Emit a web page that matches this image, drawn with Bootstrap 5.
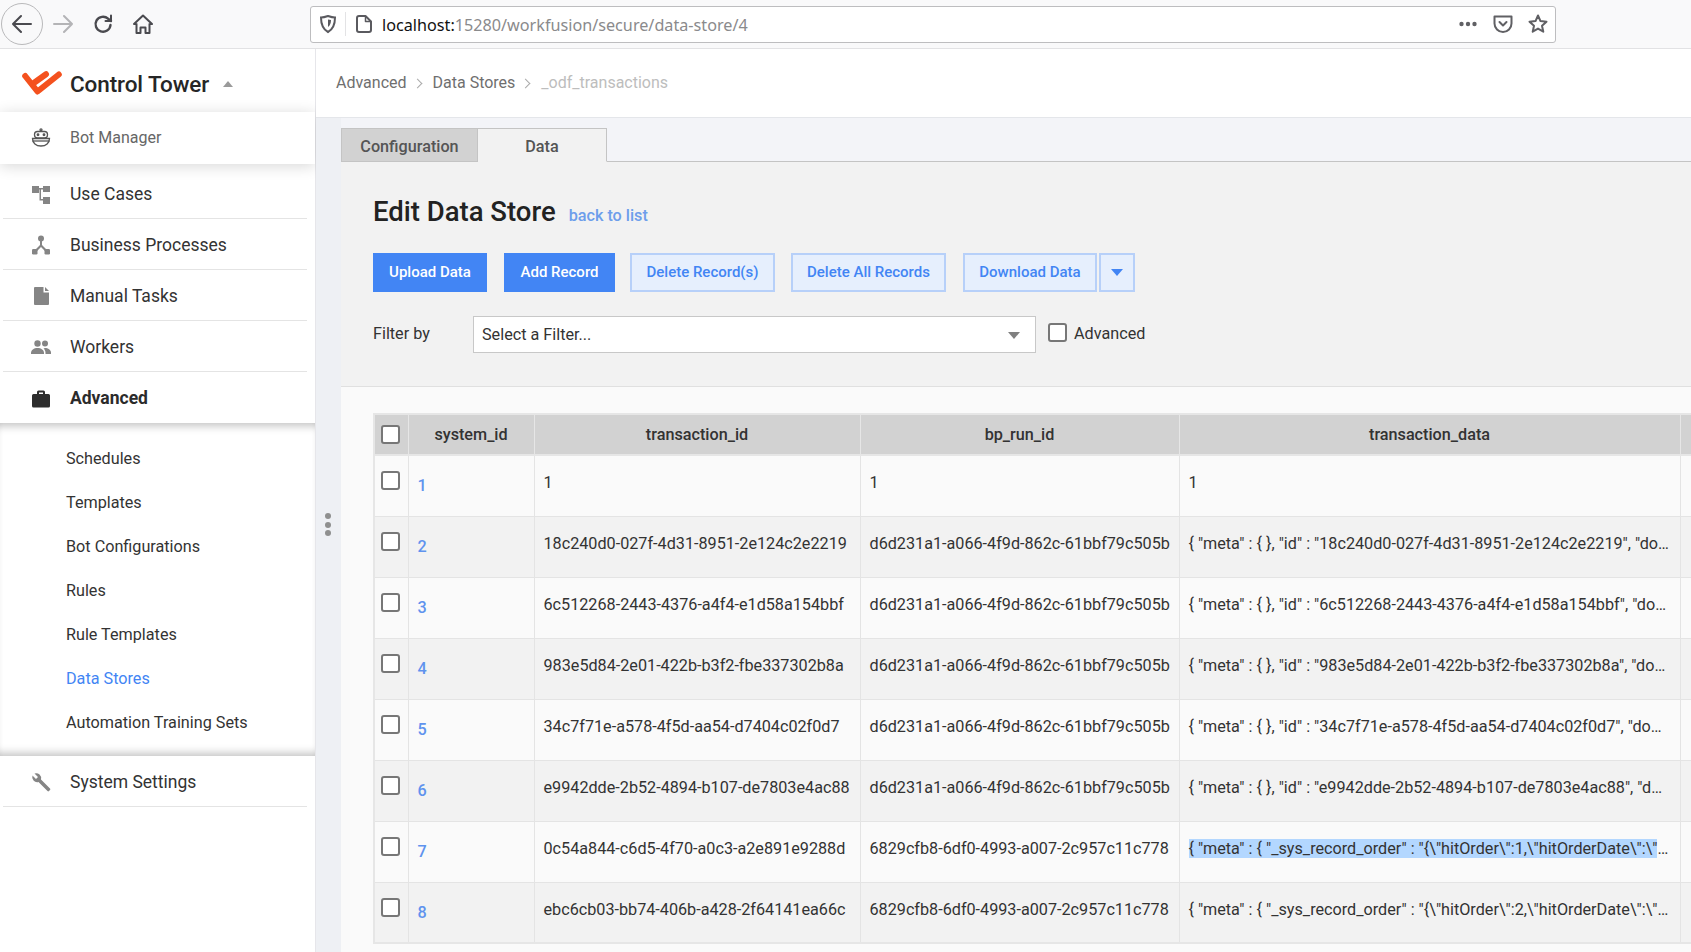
<!DOCTYPE html>
<html lang="en">
<head>
<meta charset="utf-8">
<title>Data Store</title>
<link href="https://cdn.jsdelivr.net/npm/bootstrap@5.3.0/dist/css/bootstrap.min.css" rel="stylesheet">
<style>
html,body{height:952px;overflow:hidden;background:#fff}
body{font-family:Roboto,"Liberation Sans",sans-serif;color:#333}
.chrome{height:49px;background:#f9f9fa;border-bottom:1px solid #e2e2e4;padding-left:1px}
.backbtn{width:42px;height:42px;border:1px solid #b9b9bb;border-radius:50%;background:#fff0;margin-right:10px}
.chicon{width:20px;height:20px;display:block}
.navslot{width:40px}
.urlbox{margin-left:157px;width:1246px;height:37px;background:#fff;border:1px solid #bdbdbf;border-radius:3px;padding:0 7px;font-family:"Noto Sans",sans-serif;font-size:16.2px;color:#8a8a8c;white-space:nowrap}
.urlbox b{font-weight:400;color:#111}
.urltext{padding-top:2px}
.urldiv{width:1px;height:24px;background:#e3e3e5;margin:0 8px 0 7px}
.gap15{margin-right:15px}
.shell{height:903px}
.sidepane{width:316px;flex:none;background:#fff;border-right:1px solid #e6e6ea;position:relative}
.brandrow{height:63px;padding-left:22px}
.brandrow svg{margin-top:4px}
.brandname{font-size:22.5px;font-weight:500;color:#262626;margin-left:8px;margin-top:8px;letter-spacing:-.1px}
.brandcaret{width:0;height:0;border-left:5px solid transparent;border-right:5px solid transparent;border-bottom:6px solid #9a9a9a;margin-left:14px;margin-top:6px}
.botrow{height:52px;padding-left:31px;background:#fff;box-shadow:0 2px 14px rgba(0,0,0,.16);font-size:16px;color:#666;position:relative}
.sidelist{background:transparent}
.sidelist .list-group-item{height:51px;margin:0 8px 0 3px;padding:2px 0 0 28px;border:0;border-bottom:1px solid #e4e4e4;border-radius:0;font-size:17.5px;color:#333;background:transparent;display:flex;align-items:center}
.sideicon{width:20px;height:20px;flex:none;margin-right:19px;display:block}
.sidelist .firstitem{height:55px;padding-top:7px}
.sidelist .openitem{font-weight:700;color:#2b2b2b;border-bottom:0;margin-right:0}
.subwrap{height:333px;padding-top:14px;background:#fff;box-shadow:inset 0 9px 9px -6px rgba(0,0,0,.24),inset 0 -9px 9px -6px rgba(0,0,0,.24)}
.subwrap a{display:flex;align-items:center;height:44px;padding-left:66px;font-size:16.2px;color:#333;text-decoration:none}
.subwrap a.onitem{color:#4285f4}
.gutter{width:25px;flex:none;background:#eef0f4;position:relative}
.gripdots{position:absolute;left:9px;top:464px;display:flex;flex-direction:column;gap:2.5px}
.gripdots span{width:6px;height:6px;border-radius:50%;background:#8f8f8f}
.mainpane{flex:1;min-width:0;background:#f3f4f8;position:relative}
.crumbbar{height:69px;margin-left:-25px;background:#fff;border-bottom:1px solid #e4e6ea;padding-left:20px;font-size:16px}
.crumbbar .breadcrumb-item{color:#6f6f6f;display:flex;align-items:center}
.crumbbar .breadcrumb-item+.breadcrumb-item{padding-left:7px}
.crumbbar .breadcrumb-item+.breadcrumb-item::before{content:"";width:7px;height:7px;border-top:1.5px solid #aaa;border-right:1.5px solid #aaa;transform:rotate(45deg);display:block;float:none;padding:0;margin:0 12px 0 0}
.crumbbar .breadcrumb-item.active{color:#bdbdbd}
.tabline{margin-top:10px;border-bottom:1px solid #c4c4c4;height:34px;flex-wrap:nowrap}
.tabline .nav-link{height:34px;border:1px solid #c4c4c4;border-radius:0;margin:0;padding:5px 0 0;display:flex;align-items:center;justify-content:center;font-size:16.2px;font-weight:500;color:#555}
.tabconf{width:137px;background:#d2d2d2}
.tabline .nav-link.tabdata{width:129px;background:#f2f2f2;border-left:0;border-bottom-color:#f2f2f2;color:#555}
.editpanel{height:225px;background:#f2f2f2;border-bottom:1px solid #e0e0e0;padding:0 0 0 32px;width:100%}
.edithead{padding-top:7px;height:91px;align-items:center}
.edithead h1{font-size:27.5px;font-weight:500;margin:0;color:#222}
.edithead a{font-size:16.2px;color:#6d9eeb;text-decoration:none;font-weight:500;margin-left:13px;padding-top:10px}
.actionrow{height:39px}
.actionrow .btn{height:39px;padding:0;font-size:15px;font-weight:500;border-radius:0;display:flex;align-items:center;justify-content:center}
.btnsolid{background:#4285f4;border:0;color:#fff}
.btnpale{background:#e6effd;border:2px solid #b7d0f9;color:#4285f4}
.w114{width:114px;margin-right:17px}.w111{width:111px;margin-right:15px}.w145{width:145px;margin-right:16px}.w155{width:155px;margin-right:17px}.w134{width:134px;margin-right:2px}.w36{width:36px}
.downcaret{width:0;height:0;border-left:6px solid transparent;border-right:6px solid transparent;border-top:7px solid #4285f4}
.filterrow{margin-top:24px;height:37px;font-size:16.2px;color:#333}
.filterlabel{width:100px}
.filtersel{width:563px;height:37px;border:1px solid #c8c8c8;padding:2px 8px 0;display:flex;align-items:center;justify-content:space-between;background:#fff}
.selcaret{width:0;height:0;border-left:6px solid transparent;border-right:6px solid transparent;border-top:7px solid #808080;margin-right:7px}
.boxmark{display:block;width:19px;height:19px;flex:none;border:2px solid #777;border-radius:3px;background-color:#fff}
.advcheck{margin-left:12px}
.advcheck .boxmark{margin-bottom:4px}
.advcheck label{margin-left:7px}
.gridarea{background:#fafafa;height:566px;padding:26px 0 0 32px;overflow:hidden}
.datatable{table-layout:fixed;width:1506px;margin:0;border-collapse:collapse;border:2px solid #e6e6e6;font-size:16.2px;color:#333;--bs-table-bg:transparent}
.datatable th{height:41px;padding:2px 0 0;text-align:center;vertical-align:middle;background:#d2d2d2;font-weight:500;font-size:16.2px;color:#333;border:1px solid #e6e6e6;border-bottom:2px solid #e6e6e6}
.datatable td{height:61px;padding:17px 2px 0 9px;vertical-align:top;border:1px solid #e4e4e4;border-top:0;white-space:nowrap;overflow:hidden;text-overflow:ellipsis;line-height:19px}
.datatable tr:nth-child(odd) td{background:#fafafa}
.datatable tr:nth-child(even) td{background:#f2f2f2}
.datatable th .boxmark{margin:-2px auto 0 6px}
.datatable td.tickcell{padding:15px 0 0 6px}
.datatable td.linkcell{padding:20px 0 0 9px}
.datatable td.linkcell a{color:#5f93ee;text-decoration:none;font-weight:500}
.datatable td.jsoncell{padding-right:10px}
.datatable td.shortclip{padding-right:16px}
.picked{background:#b3d7ff}
</style>
</head>
<body>
<div class="chrome d-flex align-items-center">
  <div class="backbtn d-flex align-items-center justify-content-center"><svg class="chicon" viewBox="0 0 20 20" fill="none" stroke="#4a4a4f" stroke-width="2" stroke-linecap="round" stroke-linejoin="round"><path d="M1 10h18M9 2l-8 8 8 8"/></svg></div>
  <div class="navslot"><svg class="chicon" viewBox="0 0 20 20" fill="none" stroke="#b4b4b6" stroke-width="2" stroke-linecap="round" stroke-linejoin="round"><path d="M1 10h18M11 2l8 8-8 8"/></svg></div>
  <div class="navslot"><svg class="chicon" viewBox="0 0 20 20" fill="none" stroke="#4a4a4f" stroke-width="2.4" stroke-linecap="round" stroke-linejoin="round"><path d="M17.5 11a7.5 7.5 0 1 1-2.4-6.3L18 7"/><path d="M18 1.5V7h-5.5" stroke-width="2"/></svg></div>
  <div><svg class="chicon" viewBox="0 0 20 20" fill="none" stroke="#4a4a4f" stroke-width="2" stroke-linejoin="round"><path d="M1 10l9-8.5 9 8.500h-2.500v9H12.500v-5.500h-5V19H3.500v-9z"/></svg></div>
  <div class="urlbox d-flex align-items-center">
    <svg class="chicon" viewBox="0 0 20 20" fill="none" stroke="#5a5a5f" stroke-width="2"><path d="M3 3.500c2 0 5-.8 7-1.500 2 .7 5 1.500 7 1.500 0 7-1.500 11.500-7 14.500C4.500 15 3 10.500 3 3.500z"/><path d="M10 5.500c1 .3 2 .5 3 .5 0 3-.8 5.500-3 7z" fill="#5a5a5f" stroke="none"/></svg>
    <span class="urldiv"></span>
    <svg class="chicon" viewBox="0 0 20 20" fill="none" stroke="#5a5a5f" stroke-width="2" stroke-linejoin="round"><path d="M3 4a2 2 0 0 1 2-2h6.500L17 7.500V16a2 2 0 0 1-2 2H5a2 2 0 0 1-2-2z"/><path d="M11.500 2v5.500H17" stroke-width="1.500"/></svg>
    <span class="ms-2 flex-grow-1 urltext"><b>localhost:</b>15280/workfusion/secure/data-store/4</span>
    <svg class="chicon gap15" viewBox="0 0 20 20" fill="#606064"><circle cx="3.500" cy="10" r="2.200"/><circle cx="10" cy="10" r="2.200"/><circle cx="16.500" cy="10" r="2.200"/></svg>
    <svg class="chicon gap15" viewBox="0 0 20 20" fill="none" stroke="#606064" stroke-width="2" stroke-linecap="round" stroke-linejoin="round"><path d="M1.500 2.500h17v7a8.500 8.500 0 0 1-17 0z"/><path d="M6.500 8l3.500 3.500L13.500 8"/></svg>
    <svg class="chicon" viewBox="0 0 20 20" fill="none" stroke="#606064" stroke-width="2" stroke-linejoin="round"><path d="M10 1.500l2.500 5.600 6 .6-4.500 4 1.300 6-5.300-3.100-5.300 3.100 1.300-6-4.500-4 6-.6z"/></svg>
  </div>
</div>
<div class="shell d-flex">
  <aside class="sidepane">
    <div class="brandrow d-flex align-items-center">
      <svg width="40" height="24" viewBox="0 0 40 24" fill="none" stroke="#f4511e" stroke-width="6" stroke-linecap="round" stroke-linejoin="round"><path d="M3.200 5l12.300 15.500L36.800 3.500"/><path d="M12.500 11.500L24 3.200"/></svg>
      <span class="brandname">Control Tower</span><span class="brandcaret"></span>
    </div>
    <div class="botrow d-flex align-items-center">
      <svg class="sideicon" viewBox="0 0 20 20" fill="none" stroke="#555" stroke-width="1.300"><circle cx="10" cy="1.800" r="1"/><rect x="3.500" y="3.500" width="13" height="6.500" rx="3"/><path d="M1.500 10.500h17c0 4.500-3.500 7.500-8.500 7.500s-8.500-3-8.500-7.500z"/><path d="M1.500 13h17"/><circle cx="7" cy="6.700" r=".8" fill="#555"/><circle cx="13" cy="6.700" r=".8" fill="#555"/></svg>
      Bot Manager
    </div>
    <div class="list-group sidelist">
      <div class="list-group-item firstitem"><svg class="sideicon" viewBox="0 0 20 20" fill="#858585"><path d="M1 1h7v7H1z"/><path d="M12 1h7v6h-7zM12 12h7v7h-7z"/><path d="M8 3h4v1.500h-2V14h2v1.500H8.500V4.500H8z"/></svg>Use Cases</div>
      <div class="list-group-item"><svg class="sideicon" viewBox="0 0 20 20" fill="#858585"><circle cx="10" cy="3.500" r="3"/><rect x="1" y="14" width="5.500" height="5.500" rx="1.200"/><rect x="13.500" y="14" width="5.500" height="5.500" rx="1.200"/><path d="M9 5h2v5l5 5-1.500 1.500L10 12l-4.500 4.500L4 15l5-5z"/></svg>Business Processes</div>
      <div class="list-group-item"><svg class="sideicon" viewBox="0 0 20 20" fill="#858585"><path d="M3 2a1 1 0 0 1 1-1h8.500v5.500H18V18a1 1 0 0 1-1 1H4a1 1 0 0 1-1-1z"/><path d="M14 1l4 4h-4z"/></svg>Manual Tasks</div>
      <div class="list-group-item"><svg class="sideicon" viewBox="0 0 20 20" fill="#858585"><circle cx="6.500" cy="6.500" r="3.200"/><circle cx="14" cy="6.500" r="3"/><path d="M0 16c0-3 3-5 6.500-5s6.500 2 6.500 5v1H0z"/><path d="M14 11c3 0 6 1.800 6 4.500V17h-5.500v-1c0-2-.8-3.500-2-4.500.5-.3 1-.5 1.500-.5z"/></svg>Workers</div>
      <div class="list-group-item openitem"><svg class="sideicon" viewBox="0 0 20 20" fill="#2d2d2d"><path d="M1 6.500a1.500 1.500 0 0 1 1.500-1.500H6V3a1.500 1.500 0 0 1 1.500-1.500h5A1.500 1.500 0 0 1 14 3v2h3.500A1.500 1.500 0 0 1 19 6.500V17a1.500 1.500 0 0 1-1.500 1.500h-15A1.500 1.500 0 0 1 1 17zM8 3.500V5h4V3.500z" fill-rule="evenodd"/></svg>Advanced</div>
      <nav class="subwrap nav flex-column">
        <a href="#">Schedules</a><a href="#">Templates</a><a href="#">Bot Configurations</a><a href="#">Rules</a><a href="#">Rule Templates</a><a href="#" class="onitem">Data Stores</a><a href="#">Automation Training Sets</a>
      </nav>
      <div class="list-group-item"><svg class="sideicon" viewBox="0 0 20 20" fill="#858585"><path d="M19 16.500l-9-9a5 5 0 0 0-6.500-6L7 5 5 7 1.500 3.500a5 5 0 0 0 6 6.500l9 9a1 1 0 0 0 1.500 0l1-1a1 1 0 0 0 0-1.500z"/></svg>System Settings</div>
    </div>
  </aside>
  <div class="gutter"><div class="gripdots"><span></span><span></span><span></span></div></div>
  <main class="mainpane">
    <nav class="crumbbar d-flex align-items-center" aria-label="breadcrumb">
      <ol class="breadcrumb mb-0"><li class="breadcrumb-item">Advanced</li><li class="breadcrumb-item">Data Stores</li><li class="breadcrumb-item active">_odf_transactions</li></ol>
    </nav>
    <ul class="nav tabline">
      <li class="nav-item"><a class="nav-link tabconf" href="#">Configuration</a></li>
      <li class="nav-item"><a class="nav-link tabdata" href="#">Data</a></li>
    </ul>
    <section class="editpanel">
      <div class="edithead d-flex"><h1>Edit Data Store</h1><a href="#">back to list</a></div>
      <div class="actionrow d-flex">
        <button class="btn btnsolid w114">Upload Data</button>
        <button class="btn btnsolid w111">Add Record</button>
        <button class="btn btnpale w145">Delete Record(s)</button>
        <button class="btn btnpale w155">Delete All Records</button>
        <button class="btn btnpale w134">Download Data</button>
        <button class="btn btnpale w36" aria-label="More"><span class="downcaret"></span></button>
      </div>
      <div class="filterrow d-flex align-items-center">
        <span class="filterlabel">Filter by</span>
        <div class="filtersel"><span>Select a Filter...</span><span class="selcaret"></span></div>
        <div class="advcheck d-flex align-items-center"><span class="boxmark"></span><label>Advanced</label></div>
      </div>
    </section>
    <section class="gridarea">
      <table class="table datatable">
        <colgroup><col style="width:34px"><col style="width:126px"><col style="width:326px"><col style="width:319px"><col style="width:501px"><col style="width:200px"></colgroup>
        <thead><tr><th><span class="boxmark"></span></th><th>system_id</th><th>transaction_id</th><th>bp_run_id</th><th>transaction_data</th><th></th></tr></thead>
        <tbody>
          <tr><td class="tickcell"><span class="boxmark"></span></td><td class="linkcell"><a href="#">1</a></td><td>1</td><td>1</td><td class="jsoncell">1</td><td></td></tr>
          <tr><td class="tickcell"><span class="boxmark"></span></td><td class="linkcell"><a href="#">2</a></td><td>18c240d0-027f-4d31-8951-2e124c2e2219</td><td>d6d231a1-a066-4f9d-862c-61bbf79c505b</td><td class="jsoncell">{ "meta" : { }, "id" : "18c240d0-027f-4d31-8951-2e124c2e2219", "document" : { } }</td><td></td></tr>
          <tr><td class="tickcell"><span class="boxmark"></span></td><td class="linkcell"><a href="#">3</a></td><td>6c512268-2443-4376-a4f4-e1d58a154bbf</td><td>d6d231a1-a066-4f9d-862c-61bbf79c505b</td><td class="jsoncell">{ "meta" : { }, "id" : "6c512268-2443-4376-a4f4-e1d58a154bbf", "document" : { } }</td><td></td></tr>
          <tr><td class="tickcell"><span class="boxmark"></span></td><td class="linkcell"><a href="#">4</a></td><td>983e5d84-2e01-422b-b3f2-fbe337302b8a</td><td>d6d231a1-a066-4f9d-862c-61bbf79c505b</td><td class="jsoncell">{ "meta" : { }, "id" : "983e5d84-2e01-422b-b3f2-fbe337302b8a", "document" : { } }</td><td></td></tr>
          <tr><td class="tickcell"><span class="boxmark"></span></td><td class="linkcell"><a href="#">5</a></td><td>34c7f71e-a578-4f5d-aa54-d7404c02f0d7</td><td>d6d231a1-a066-4f9d-862c-61bbf79c505b</td><td class="jsoncell shortclip">{ "meta" : { }, "id" : "34c7f71e-a578-4f5d-aa54-d7404c02f0d7", "document" : { } }</td><td></td></tr>
          <tr><td class="tickcell"><span class="boxmark"></span></td><td class="linkcell"><a href="#">6</a></td><td>e9942dde-2b52-4894-b107-de7803e4ac88</td><td>d6d231a1-a066-4f9d-862c-61bbf79c505b</td><td class="jsoncell">{ "meta" : { }, "id" : "e9942dde-2b52-4894-b107-de7803e4ac88", "document" : { } }</td><td></td></tr>
          <tr><td class="tickcell"><span class="boxmark"></span></td><td class="linkcell"><a href="#">7</a></td><td>0c54a844-c6d5-4f70-a0c3-a2e891e9288d</td><td>6829cfb8-6df0-4993-a007-2c957c11c778</td><td class="jsoncell"><span class="picked">{ "meta" : { "_sys_record_order" : "{\"hitOrder\":1,\"hitOrderDate\":\"</span>2020-01-01\"}" } }</td><td></td></tr>
          <tr><td class="tickcell"><span class="boxmark"></span></td><td class="linkcell"><a href="#">8</a></td><td>ebc6cb03-bb74-406b-a428-2f64141ea66c</td><td>6829cfb8-6df0-4993-a007-2c957c11c778</td><td class="jsoncell">{ "meta" : { "_sys_record_order" : "{\"hitOrder\":2,\"hitOrderDate\":\"2020-01-01\"}" } }</td><td></td></tr>
        </tbody>
      </table>
    </section>
  </main>
</div>
<script src="https://cdn.jsdelivr.net/npm/bootstrap@5.3.0/dist/js/bootstrap.bundle.min.js"></script>
</body>
</html>
